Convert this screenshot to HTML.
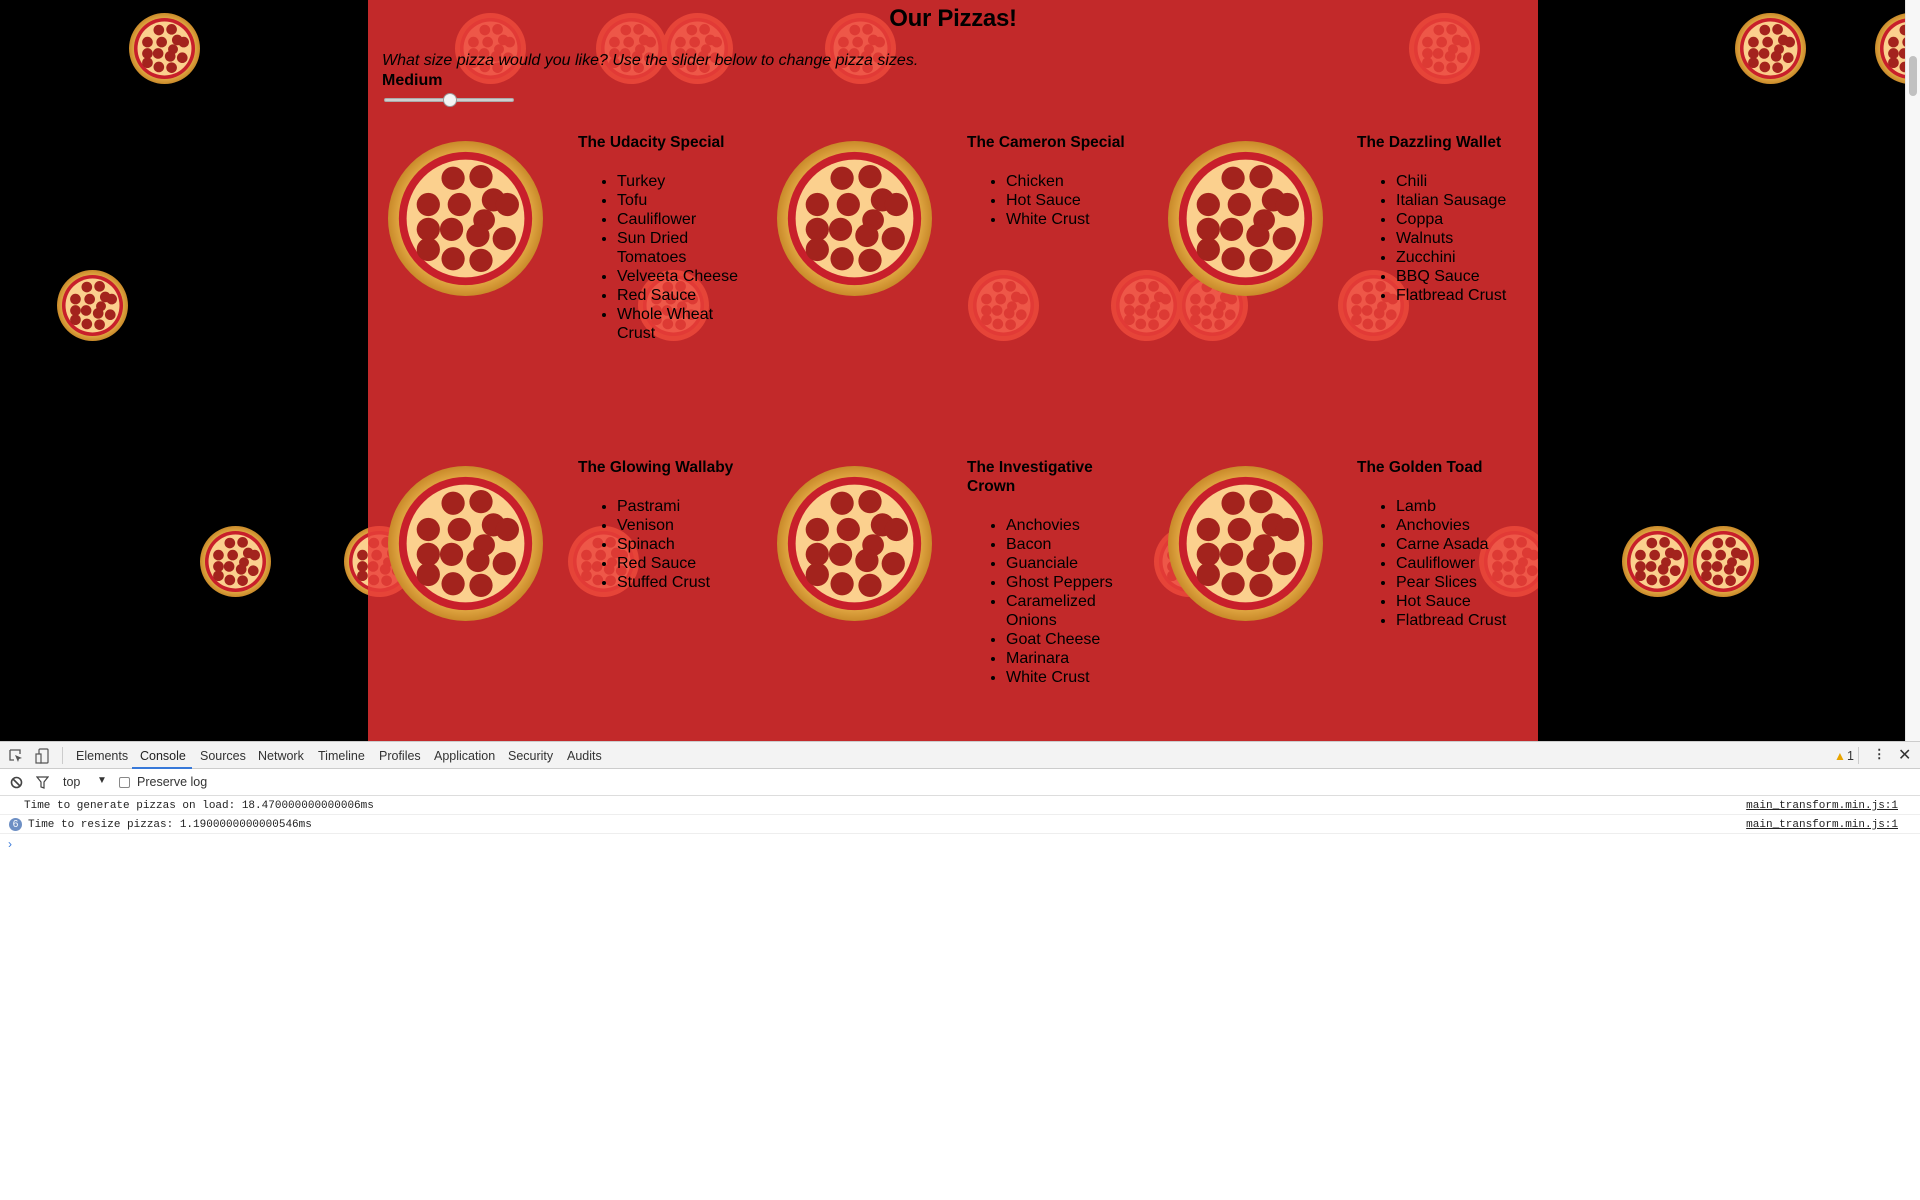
<!DOCTYPE html>
<html><head><meta charset="utf-8">
<style>
*{margin:0;padding:0;box-sizing:border-box}
body{width:1920px;height:1200px;overflow:hidden;background:#000;font-family:"Liberation Sans",sans-serif;position:relative}
#page{position:absolute;left:0;top:0;width:1905px;height:741px;background:#000;overflow:hidden}
#panel{position:absolute;left:368px;top:0;width:1170px;height:741px;background:#c2292a;overflow:hidden}
.bg{position:absolute;width:71px;height:73px}
h1{position:absolute;top:5px;left:0;width:100%;text-align:center;font-size:24px;font-weight:bold;color:#000;letter-spacing:-0.3px}
.q{position:absolute;left:14px;top:52px;font-size:16px;font-style:italic}
.m{position:absolute;left:14px;top:72px;font-size:16px;font-weight:bold}
.track{position:absolute;left:16px;top:98px;width:130px;height:4px;background:#cfcfcf;border-radius:2px;border:1px solid #aaa}
.thumb{position:absolute;left:75px;top:93px;width:14px;height:14px;border-radius:50%;background:#f4f4f4;border:1px solid #999}
.pz{position:absolute;width:157px;height:155px}
.card{position:absolute;font-size:16px;color:#000}
.card h4{font-size:15.5px;font-weight:bold;line-height:19px;margin-bottom:20px}
.card ul{margin-left:39px;line-height:19px}
#sb{position:absolute;left:1905px;top:0;width:15px;height:741px;background:#f7f7f7;border-left:1px solid #e6e6e6}
#sb div{position:absolute;left:3px;top:56px;width:8px;height:40px;background:#c1c1c1;border-radius:4px}
#dt{position:absolute;left:0;top:741px;width:1920px;height:459px;background:#fff;font-size:12.5px;color:#333}
.tb{height:28px;border-top:1px solid #ccc;border-bottom:1px solid #ccc;background:#f3f3f3;position:relative}
.tb span{position:absolute;top:7px}
.ct{height:27px;border-bottom:1px solid #ddd;position:relative}
.row{position:absolute;left:0;width:1920px;height:19px;border-bottom:1px solid #eee;font-family:"Liberation Mono",monospace;font-size:11px;color:#222}
.row .t{position:absolute;left:24px;top:4px}
.row .l{position:absolute;right:22px;top:4px;text-decoration:underline}
</style></head><body>
<svg width="0" height="0" style="position:absolute">
<defs>
<radialGradient id="cr" cx="50%" cy="50%" r="50%"><stop offset="80%" stop-color="#e8b04a"/><stop offset="100%" stop-color="#c98a2a"/></radialGradient>
<g id="pep">
<circle cx="42" cy="24" r="7.5"/><circle cx="60" cy="23" r="7.5"/><circle cx="26" cy="41" r="7.5"/><circle cx="46" cy="41" r="7.5"/><circle cx="68" cy="38" r="7.5"/><circle cx="77" cy="41" r="7.5"/><circle cx="26" cy="57" r="7.5"/><circle cx="41" cy="57" r="7.5"/><circle cx="62" cy="51" r="7"/><circle cx="58" cy="61" r="7.5"/><circle cx="75" cy="63" r="7.5"/><circle cx="26" cy="70" r="7.5"/><circle cx="42" cy="76" r="7.5"/><circle cx="60" cy="77" r="7.5"/>
</g>
<symbol id="p" viewBox="0 0 100 100">
<ellipse cx="50" cy="50" rx="50" ry="50" fill="url(#cr)"/>
<ellipse cx="50" cy="50" rx="43" ry="43" fill="#c81f2b"/>
<ellipse cx="50" cy="50" rx="38" ry="38" fill="#fbd08e"/>
<use href="#pep" fill="#a3231d"/></symbol>
<symbol id="f" viewBox="0 0 100 100">
<ellipse cx="50" cy="50" rx="50" ry="50" fill="#e64438"/>
<ellipse cx="50" cy="50" rx="43" ry="43" fill="#e23a36"/>
<ellipse cx="50" cy="50" rx="38" ry="38" fill="#ee5748"/>
<use href="#pep" fill="#dd3a34"/></symbol>
</defs></svg>
<div id="page">
<svg class="bg" style="left:129px;top:12px"><use href="#p"/></svg>
<svg class="bg" style="left:57px;top:269px"><use href="#p"/></svg>
<svg class="bg" style="left:200px;top:525px"><use href="#p"/></svg>
<svg class="bg" style="left:344px;top:525px"><use href="#p"/></svg>
<svg class="bg" style="left:1735px;top:12px"><use href="#p"/></svg>
<svg class="bg" style="left:1875px;top:12px"><use href="#p"/></svg>
<svg class="bg" style="left:1622px;top:525px"><use href="#p"/></svg>
<svg class="bg" style="left:1688px;top:525px"><use href="#p"/></svg>
<div id="panel">
<svg class="bg" style="left:87px;top:12px"><use href="#f"/></svg>
<svg class="bg" style="left:228px;top:12px"><use href="#f"/></svg>
<svg class="bg" style="left:294px;top:12px"><use href="#f"/></svg>
<svg class="bg" style="left:457px;top:12px"><use href="#f"/></svg>
<svg class="bg" style="left:1041px;top:12px"><use href="#f"/></svg>
<svg class="bg" style="left:270px;top:269px"><use href="#f"/></svg>
<svg class="bg" style="left:600px;top:269px"><use href="#f"/></svg>
<svg class="bg" style="left:743px;top:269px"><use href="#f"/></svg>
<svg class="bg" style="left:809px;top:269px"><use href="#f"/></svg>
<svg class="bg" style="left:970px;top:269px"><use href="#f"/></svg>
<svg class="bg" style="left:-24px;top:525px"><use href="#f"/></svg>
<svg class="bg" style="left:200px;top:525px"><use href="#f"/></svg>
<svg class="bg" style="left:786px;top:525px"><use href="#f"/></svg>
<svg class="bg" style="left:1111px;top:525px"><use href="#f"/></svg>
<h1>Our Pizzas!</h1>
<div class="q">What size pizza would you like? Use the slider below to change pizza sizes.</div>
<div class="m">Medium</div>
<div class="track"></div><div class="thumb"></div>

<svg class="pz" style="left:19px;top:141px"><use href="#p"/></svg>
<svg class="pz" style="left:408px;top:141px"><use href="#p"/></svg>
<svg class="pz" style="left:799px;top:141px"><use href="#p"/></svg>
<svg class="pz" style="left:19px;top:466px"><use href="#p"/></svg>
<svg class="pz" style="left:408px;top:466px"><use href="#p"/></svg>
<svg class="pz" style="left:799px;top:466px"><use href="#p"/></svg>

<div class="card" style="left:210px;top:133px;width:170px"><h4>The Udacity Special</h4><ul><li>Turkey</li><li>Tofu</li><li>Cauliflower</li><li>Sun Dried Tomatoes</li><li>Velveeta Cheese</li><li>Red Sauce</li><li>Whole Wheat Crust</li></ul></div>
<div class="card" style="left:599px;top:133px;width:170px"><h4>The Cameron Special</h4><ul><li>Chicken</li><li>Hot Sauce</li><li>White Crust</li></ul></div>
<div class="card" style="left:989px;top:133px;width:180px"><h4>The Dazzling Wallet</h4><ul><li>Chili</li><li>Italian Sausage</li><li>Coppa</li><li>Walnuts</li><li>Zucchini</li><li>BBQ Sauce</li><li>Flatbread Crust</li></ul></div>
<div class="card" style="left:210px;top:458px;width:170px"><h4>The Glowing Wallaby</h4><ul><li>Pastrami</li><li>Venison</li><li>Spinach</li><li>Red Sauce</li><li>Stuffed Crust</li></ul></div>
<div class="card" style="left:599px;top:458px;width:160px"><h4>The Investigative Crown</h4><ul><li>Anchovies</li><li>Bacon</li><li>Guanciale</li><li>Ghost Peppers</li><li>Caramelized Onions</li><li>Goat Cheese</li><li>Marinara</li><li>White Crust</li></ul></div>
<div class="card" style="left:989px;top:458px;width:180px"><h4>The Golden Toad</h4><ul><li>Lamb</li><li>Anchovies</li><li>Carne Asada</li><li>Cauliflower</li><li>Pear Slices</li><li>Hot Sauce</li><li>Flatbread Crust</li></ul></div>
</div>
</div>
<div id="sb"><div></div></div>
<div id="dt">
<div class="tb">
<svg style="position:absolute;left:9px;top:7px" width="14" height="14" viewBox="0 0 14 14"><path d="M1 1h10v4M1 1v10h4" stroke="#555" fill="none" stroke-width="1.3"/><path d="M6 6l7 3-3 1-1 3z" fill="#555"/></svg>
<svg style="position:absolute;left:35px;top:6px" width="14" height="16" viewBox="0 0 14 16"><rect x="4" y="1" width="9" height="14" rx="1" stroke="#555" fill="none" stroke-width="1.2"/><rect x="1" y="6" width="5" height="9" stroke="#555" fill="#f3f3f3" stroke-width="1.2"/></svg>
<div style="position:absolute;left:62px;top:5px;width:1px;height:17px;background:#ccc"></div>
<span style="left:76px">Elements</span>
<span style="left:140px;color:#222">Console</span>
<div style="position:absolute;left:132px;top:25px;width:60px;height:2px;background:#3879d9"></div>
<span style="left:200px">Sources</span>
<span style="left:258px">Network</span>
<span style="left:318px">Timeline</span>
<span style="left:379px">Profiles</span>
<span style="left:434px">Application</span>
<span style="left:508px">Security</span>
<span style="left:567px">Audits</span>
<span style="left:1834px;color:#e8a400;font-size:12px">▲</span><span style="left:1847px">1</span>
<div style="position:absolute;left:1858px;top:5px;width:1px;height:17px;background:#ccc"></div>
<span style="left:1873px;font-weight:bold;top:4px">⋮</span>
<span style="left:1898px;font-size:16px;top:3px">✕</span>
</div>
<div class="ct">
<svg style="position:absolute;left:10px;top:7px" width="13" height="13" viewBox="0 0 13 13"><circle cx="6.5" cy="6.5" r="5" stroke="#444" stroke-width="1.6" fill="none"/><path d="M3 3l7 7" stroke="#444" stroke-width="1.6"/></svg>
<svg style="position:absolute;left:36px;top:7px" width="13" height="13" viewBox="0 0 13 13"><path d="M1 1h11l-4 5v6l-3-1v-5z" stroke="#444" stroke-width="1.2" fill="none"/></svg>
<span style="position:absolute;left:63px;top:6px">top</span>
<span style="position:absolute;left:97px;top:6px;font-size:10px">▼</span>
<div style="position:absolute;left:119px;top:8px;width:11px;height:11px;border:1px solid #888;border-radius:2px"></div>
<span style="position:absolute;left:137px;top:6px">Preserve log</span>
</div>
<div class="row" style="top:55px"><span class="t">Time to generate pizzas on load: 18.470000000000006ms</span><span class="l">main_transform.min.js:1</span></div>
<div class="row" style="top:74px"><span style="position:absolute;left:9px;top:3px;width:13px;height:13px;border-radius:50%;background:#6d8fc4;color:#fff;font-size:10px;text-align:center;line-height:13px;font-family:'Liberation Sans',sans-serif">6</span><span class="t" style="left:28px">Time to resize pizzas: 1.1900000000000546ms</span><span class="l">main_transform.min.js:1</span></div>
<span style="position:absolute;left:8px;top:96px;color:#3879d9;font-size:12px">›</span>
</div>
</body></html>
